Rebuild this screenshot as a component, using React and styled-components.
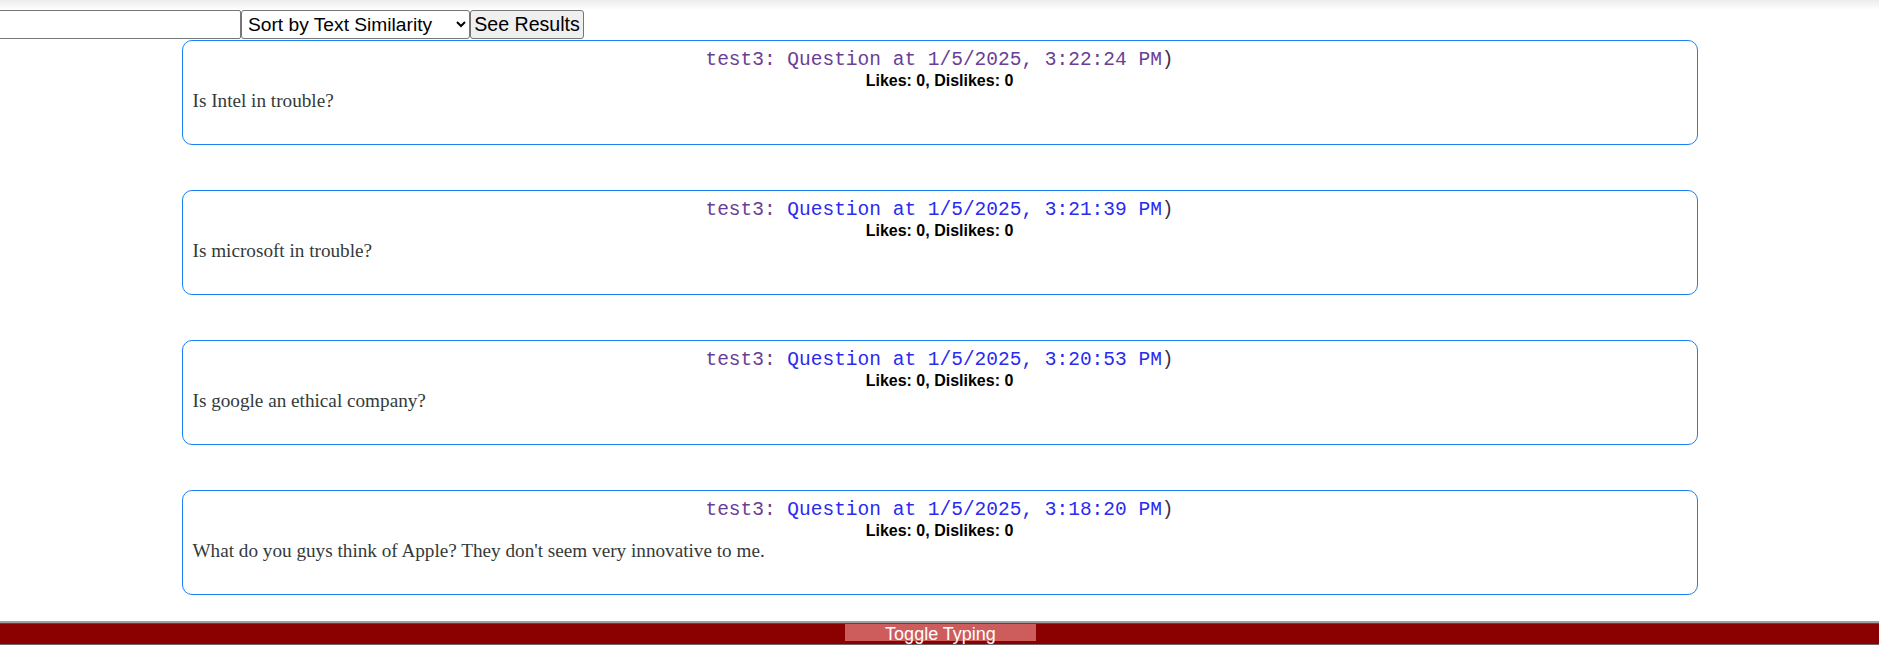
import React from "react";
import styled, { createGlobalStyle } from "styled-components";

const GlobalStyle = createGlobalStyle`
  html, body {
    margin: 0;
    padding: 0;
  }
  body {
    background: linear-gradient(to bottom, #ececec 0px, #ffffff 10px) no-repeat, #ffffff;
    font-family: "Liberation Serif", "Times New Roman", serif;
    overflow: hidden;
  }
`;

const Page = styled.div`
  min-height: 100vh;
  display: flex;
  flex-direction: column;
`;

const TopBar = styled.div`
  display: flex;
  align-items: stretch;
  height: 29px;
  padding-top: 10px;
`;

const SearchInput = styled.input`
  box-sizing: border-box;
  width: 243px;
  height: 29px;
  margin: 0 0 0 -2px;
  border: 1px solid #767676;
  border-radius: 2px;
  font-family: "Liberation Sans", Arial, sans-serif;
  font-size: 19px;
  padding: 1px 2px;
  background: #fff;
`;

const SortSelect = styled.select`
  box-sizing: border-box;
  width: 229px;
  height: 29px;
  margin: 0;
  border: 1px solid #767676;
  border-radius: 3px;
  background: #fff;
  color: #000;
  font-family: "Liberation Sans", Arial, sans-serif;
  font-size: 19.2px;
  padding: 0 2px;
`;

const ResultsButton = styled.button`
  box-sizing: border-box;
  width: 114px;
  height: 29px;
  margin: 0;
  padding: 0 1px;
  border: 1px solid #767676;
  border-radius: 3px;
  background: #efefef;
  color: #000;
  font-family: "Liberation Sans", Arial, sans-serif;
  font-size: 19.6px;
`;

const CardList = styled.div`
  display: flex;
  flex-direction: column;
  gap: 45px;
  margin-top: 1px;
`;

const Card = styled.div`
  box-sizing: border-box;
  width: 1516px;
  margin: 0 auto;
  border: 1px solid #1a80f5;
  border-radius: 10px;
  padding: 8px 10px 32px;
`;

const CardHeader = styled.div`
  text-align: center;
  font-family: "Liberation Mono", "Courier New", monospace;
  font-size: 19.5px;
  line-height: 22px;
  color: #3a2a4a;
`;

const HeaderLink = styled.a`
  color: ${(p) => (p.$visited ? "#6a3e96" : "#2a2af0")};
  text-decoration: none;
`;

const Likes = styled.div`
  text-align: center;
  font-family: "Liberation Sans", Arial, sans-serif;
  font-weight: bold;
  font-size: 16px;
  line-height: 19px;
  color: #000;
`;

const Body = styled.div`
  font-family: "Liberation Serif", "Times New Roman", serif;
  font-size: 19.2px;
  line-height: 22px;
  color: #333a3a;
`;

const Footer = styled.div`
  margin-top: auto;
  box-sizing: border-box;
  height: 24px;
  background: #8b0000;
  border-top: 3px ridge #a0a0a0;
  border-bottom: 1px solid #6a6a6a;
  display: flex;
  justify-content: center;
  align-items: flex-start;
`;

const ToggleButton = styled.button`
  box-sizing: border-box;
  width: 191px;
  height: 17px;
  margin: 0 0 0 2px;
  padding: 0;
  border: none;
  background: #cd5c5c;
  color: #fff;
  font-family: "Liberation Sans", Arial, sans-serif;
  font-size: 18px;
  line-height: 20px;
  overflow: visible;
  display: flex;
  justify-content: center;
  align-items: flex-start;
`;

const posts = [
  { time: "1/5/2025, 3:22:24 PM", text: "Is Intel in trouble?", visited: true },
  { time: "1/5/2025, 3:21:39 PM", text: "Is microsoft in trouble?", visited: false },
  { time: "1/5/2025, 3:20:53 PM", text: "Is google an ethical company?", visited: false },
  {
    time: "1/5/2025, 3:18:20 PM",
    text: "What do you guys think of Apple? They don't seem very innovative to me.",
    visited: false,
  },
];

export default function App() {
  return (
    <Page>
      <GlobalStyle />
      <TopBar>
        <SearchInput type="text" />
        <SortSelect defaultValue="text">
          <option value="text">Sort by Text Similarity</option>
          <option value="date">Sort by Date</option>
        </SortSelect>
        <ResultsButton>See Results</ResultsButton>
      </TopBar>
      <CardList>
        {posts.map((p) => (
          <Card key={p.time}>
            <CardHeader>
              <HeaderLink $visited href="#u">test3:</HeaderLink>{" "}
              <HeaderLink $visited={p.visited} href={"#" + p.time}>
                Question at {p.time}
              </HeaderLink>
              )
            </CardHeader>
            <Likes>Likes: 0, Dislikes: 0</Likes>
            <Body>{p.text}</Body>
          </Card>
        ))}
      </CardList>
      <Footer>
        <ToggleButton>Toggle Typing</ToggleButton>
      </Footer>
    </Page>
  );
}
